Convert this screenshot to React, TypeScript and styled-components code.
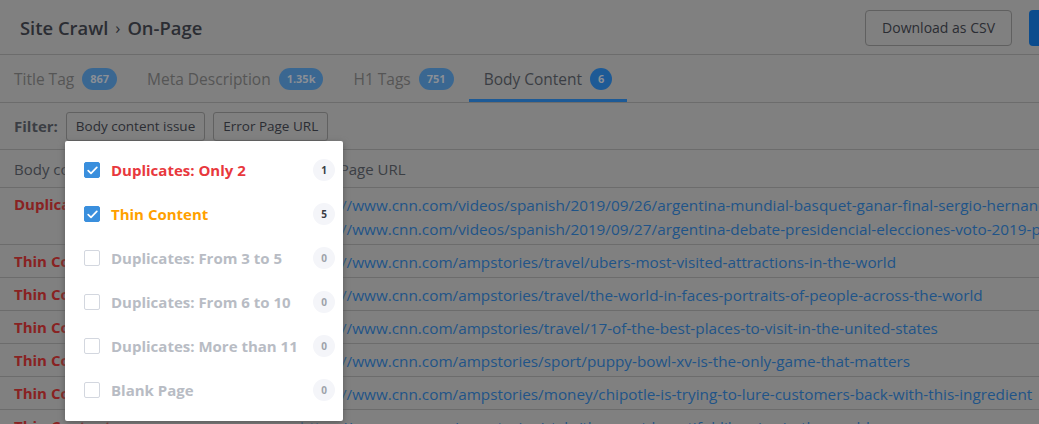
import React from "react";
import styled, { createGlobalStyle } from "styled-components";

// page colours as they look behind the open filter menu (dimmed)
const dim = {
  bg: "#808080",
  line: "#6c6c6c",
  text: "#2b2d33",
  soft: "#3b3e44",
  tab: "#555555",
  accent: "#1d5a96",
  badge: "#3a6791",
  red: "#892222",
  link: "#1f5488",
  button: "#0c4c8d",
};

const GlobalStyle = createGlobalStyle`
  html, body {
    margin: 0;
    padding: 0;
    background-color: #808080;
    font-family: "Open Sans", "Liberation Sans", sans-serif;
    overflow: hidden;
  }
  * { box-sizing: border-box; }
`;

type Row = { issue: string; urls: string[] };

const rows: Row[] = [
  {
    issue: "Duplicates: Only 2",
    urls: [
      "https://www.cnn.com/videos/spanish/2019/09/26/argentina-mundial-basquet-ganar-final-sergio-hernandez-intvw-cnne-deportes",
      "https://www.cnn.com/videos/spanish/2019/09/27/argentina-debate-presidencial-elecciones-voto-2019-perspectivas",
    ],
  },
  { issue: "Thin Content", urls: ["https://www.cnn.com/ampstories/travel/ubers-most-visited-attractions-in-the-world"] },
  { issue: "Thin Content", urls: ["https://www.cnn.com/ampstories/travel/the-world-in-faces-portraits-of-people-across-the-world"] },
  { issue: "Thin Content", urls: ["https://www.cnn.com/ampstories/travel/17-of-the-best-places-to-visit-in-the-united-states"] },
  { issue: "Thin Content", urls: ["https://www.cnn.com/ampstories/sport/puppy-bowl-xv-is-the-only-game-that-matters"] },
  { issue: "Thin Content", urls: ["https://www.cnn.com/ampstories/money/chipotle-is-trying-to-lure-customers-back-with-this-ingredient"] },
  { issue: "Thin Content", urls: ["https://www.cnn.com/ampstories/style/the-most-beautiful-libraries-in-the-world"] },
];

const tabs = [
  { label: "Title Tag", count: "867" },
  { label: "Meta Description", count: "1.35k" },
  { label: "H1 Tags", count: "751" },
  { label: "Body Content", count: "6", active: true },
];

type Tone = "red" | "orange" | "muted";

const options: { label: string; count: number; checked: boolean; tone: Tone }[] = [
  { label: "Duplicates: Only 2", count: 1, checked: true, tone: "red" },
  { label: "Thin Content", count: 5, checked: true, tone: "orange" },
  { label: "Duplicates: From 3 to 5", count: 0, checked: false, tone: "muted" },
  { label: "Duplicates: From 6 to 10", count: 0, checked: false, tone: "muted" },
  { label: "Duplicates: More than 11", count: 0, checked: false, tone: "muted" },
  { label: "Blank Page", count: 0, checked: false, tone: "muted" },
];

const toneColor: Record<Tone, string> = {
  red: "#e8383d",
  orange: "#ffa000",
  muted: "#b8bcc4",
};

const Page = styled.div`
  position: relative;
  width: 1039px;
  height: 424px;
  overflow: hidden;
  background-color: ${dim.bg};
`;

const Header = styled.header`
  display: flex;
  align-items: center;
  justify-content: space-between;
  height: 55px;
  padding: 0 0 0 20px;
  border-bottom: 1px solid ${dim.line};
`;

const Title = styled.h1`
  margin: 0;
  font-size: 18.4px;
  font-weight: 600;
  color: ${dim.text};
  display: flex;
  align-items: center;
  gap: 7px;
`;

const Crumb = styled.span`
  font-size: 17px;
  font-weight: 400;
`;

const Actions = styled.div`
  display: flex;
  align-items: center;
  gap: 17px;
  margin-right: -110px;
  padding-top: 1px;
`;

const OutlineButton = styled.button`
  height: 36px;
  padding: 0 16px;
  border: 1px solid #606060;
  border-radius: 4px;
  background-color: ${dim.bg};
  font-family: inherit;
  font-size: 14px;
  font-weight: 500;
  color: ${dim.text};
`;

const PrimaryButton = styled.button`
  height: 36px;
  width: 120px;
  border: none;
  border-radius: 4px;
  background-color: ${dim.button};
  color: #7f7f7f;
  font-family: inherit;
  font-size: 14px;
`;

const TabBar = styled.nav`
  display: flex;
  height: 48px;
  margin-left: -1px;
  border-bottom: 1px solid ${dim.line};
`;

const Tab = styled.div<{ $active?: boolean }>`
  display: flex;
  align-items: center;
  gap: 8px;
  padding: 3px 15px 0;
  font-size: 15.5px;
  color: ${(p) => (p.$active ? dim.soft : dim.tab)};
  border-bottom: 3px solid ${(p) => (p.$active ? dim.accent : "transparent")};
`;

const Badge = styled.span<{ $active?: boolean }>`
  min-width: 22px;
  height: 22px;
  padding: 0 8px;
  border-radius: 11px;
  display: inline-flex;
  align-items: center;
  justify-content: center;
  font-size: 11px;
  font-weight: 700;
  color: #8a8f96;
  background-color: ${(p) => (p.$active ? dim.accent : dim.badge)};
`;

const FilterBar = styled.div`
  display: flex;
  align-items: center;
  gap: 8px;
  height: 47px;
  padding: 0 14px;
  border-bottom: 1px solid ${dim.line};
`;

const FilterLabel = styled.span`
  font-size: 15px;
  font-weight: 700;
  color: ${dim.soft};
`;

const FilterButton = styled.button`
  height: 29px;
  padding: 0 9px;
  border: 1px solid #616161;
  border-radius: 3px;
  background-color: ${dim.bg};
  font-family: inherit;
  font-size: 13.5px;
  font-weight: 500;
  color: ${dim.text};
`;

const Table = styled.div`
  display: grid;
  grid-template-columns: 300px 1fr;
`;

const HeadCell = styled.div`
  height: 38px;
  display: flex;
  align-items: center;
  padding-left: 14px;
  font-size: 15px;
  color: ${dim.soft};
  border-bottom: 1px solid ${dim.line};
  white-space: nowrap;
  &:nth-child(2) {
    padding-left: 0;
  }
`;

const IssueCell = styled.div`
  padding: 4px 0 4px 14px;
  line-height: 24px;
  font-size: 15px;
  font-weight: 700;
  color: ${dim.red};
  border-bottom: 1px solid ${dim.line};
  white-space: nowrap;
`;

const UrlCell = styled.div`
  padding: 5px 0 3px 0;
  line-height: 24px;
  border-bottom: 1px solid ${dim.line};
  display: flex;
  flex-direction: column;
  min-width: 0;
  overflow: hidden;
`;

const Link = styled.a`
  font-size: 15.3px;
  color: ${dim.link};
  text-decoration: none;
  white-space: nowrap;
`;

const Menu = styled.div`
  position: absolute;
  left: 65px;
  top: 141px;
  width: 278px;
  padding: 7px 8px 9px 19px;
  background-color: #ffffff;
  border-radius: 2px;
  box-shadow: 0 2px 6px #5a5a5a;
  z-index: 10;
`;

const Option = styled.label`
  display: flex;
  align-items: center;
  height: 44px;
`;

const Check = styled.span<{ $checked: boolean }>`
  width: 16px;
  height: 16px;
  flex: none;
  border-radius: 2px;
  display: inline-flex;
  align-items: center;
  justify-content: center;
  background-color: ${(p) => (p.$checked ? "#3a8fdd" : "#fff")};
  border: ${(p) => (p.$checked ? "1px solid #3a8fdd" : "1.5px solid #d3d7df")};
`;

const OptionLabel = styled.span<{ $tone: Tone }>`
  flex: 1;
  margin-left: 11px;
  font-size: 15px;
  font-weight: 700;
  color: ${(p) => toneColor[p.$tone]};
  white-space: nowrap;
`;

const Count = styled.span<{ $zero: boolean }>`
  width: 22px;
  height: 22px;
  border-radius: 50%;
  background-color: #f4f5f9;
  display: inline-flex;
  align-items: center;
  justify-content: center;
  font-size: 10px;
  font-weight: 700;
  color: ${(p) => (p.$zero ? "#9ea2aa" : "#3a3d44")};
`;

const Tick = () => (
  <svg width="11" height="9" viewBox="0 0 11 9" fill="none">
    <path d="M1.2 4.6 L4 7.3 L9.8 1.4" stroke="#fff" strokeWidth="1.7" strokeLinecap="round" strokeLinejoin="round" />
  </svg>
);

export default function App() {
  return (
    <Page>
      <GlobalStyle />
      <Header>
        <Title>
          Site Crawl <Crumb>›</Crumb> On-Page
        </Title>
        <Actions>
          <OutlineButton>Download as CSV</OutlineButton>
          <PrimaryButton>Recrawl</PrimaryButton>
        </Actions>
      </Header>
      <TabBar>
        {tabs.map((t) => (
          <Tab key={t.label} $active={t.active}>
            {t.label}
            <Badge $active={t.active}>{t.count}</Badge>
          </Tab>
        ))}
      </TabBar>
      <FilterBar>
        <FilterLabel>Filter:</FilterLabel>
        <FilterButton>Body content issue</FilterButton>
        <FilterButton>Error Page URL</FilterButton>
      </FilterBar>
      <Table>
        <HeadCell>Body content issue</HeadCell>
        <HeadCell>Error Page URL</HeadCell>
        {rows.map((r, i) => (
          <React.Fragment key={i}>
            <IssueCell>{r.issue}</IssueCell>
            <UrlCell>
              {r.urls.map((u) => (
                <Link key={u} href="#">
                  {u}
                </Link>
              ))}
            </UrlCell>
          </React.Fragment>
        ))}
      </Table>
      <Menu>
        {options.map((o) => (
          <Option key={o.label}>
            <Check $checked={o.checked}>{o.checked && <Tick />}</Check>
            <OptionLabel $tone={o.tone}>{o.label}</OptionLabel>
            <Count $zero={o.count === 0}>{o.count}</Count>
          </Option>
        ))}
      </Menu>
    </Page>
  );
}
